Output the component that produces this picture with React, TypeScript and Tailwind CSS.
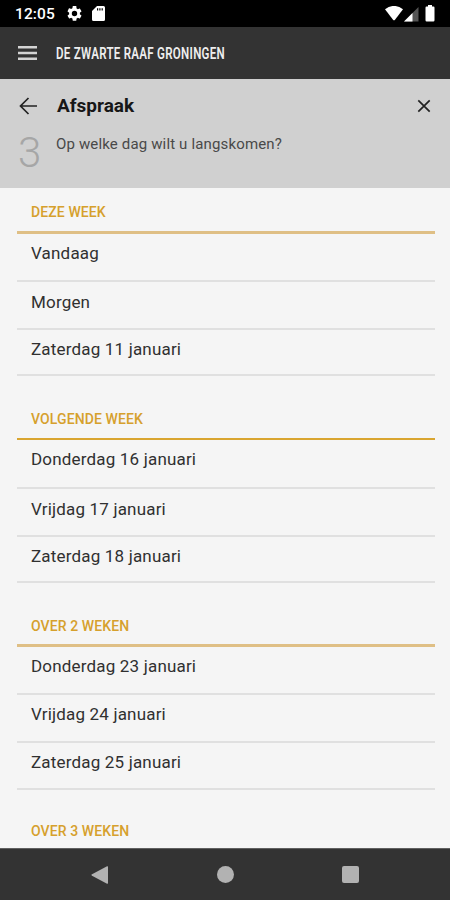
type Day = { label: string; row: string };
type Week = { title: string; head: string; days: Day[] };

const weeks: Week[] = [
  {
    title: 'DEZE WEEK',
    head: 'h-[46px] pt-[14px] border-[#dfbf85] border-b-[3px]',
    days: [
      { label: 'Vandaag', row: 'h-12 pt-2' },
      { label: 'Morgen', row: 'h-12 pt-[9px]' },
      { label: 'Zaterdag 11 januari', row: 'h-[46px] pt-2' },
    ],
  },
  {
    title: 'VOLGENDE WEEK',
    head: 'h-16 pt-[33px] border-[#d9a530] border-b-2',
    days: [
      { label: 'Donderdag 16 januari', row: 'h-[49px] pt-2' },
      { label: 'Vrijdag 17 januari', row: 'h-12 pt-[9px]' },
      { label: 'Zaterdag 18 januari', row: 'h-[46px] pt-2' },
    ],
  },
  {
    title: 'OVER 2 WEKEN',
    head: 'h-16 pt-[33px] border-[#dfbf85] border-b-[3px]',
    days: [
      { label: 'Donderdag 23 januari', row: 'h-12 pt-2' },
      { label: 'Vrijdag 24 januari', row: 'h-12 pt-2' },
      { label: 'Zaterdag 25 januari', row: 'h-[47px] pt-2' },
    ],
  },
];

function StatusBar() {
  return (
    <div className="flex h-[27px] shrink-0 items-start bg-black text-white">
      <span className="ml-[15px] mt-[4px] w-[52px] text-[15.5px] font-medium leading-5 tracking-[0.1px]">12:05</span>
      <svg className="mt-[6px] h-[15px] w-[15px]" viewBox="2 2 20 20" fill="currentColor">
        <path d="M19.14 12.94c.04-.3.06-.61.06-.94s-.02-.64-.07-.94l2.03-1.58a.49.49 0 0 0 .12-.61l-1.92-3.32a.49.49 0 0 0-.59-.22l-2.39.96a7 7 0 0 0-1.62-.94l-.36-2.54A.48.48 0 0 0 13.92 2h-3.84a.48.48 0 0 0-.48.41l-.36 2.54c-.59.24-1.13.57-1.62.94l-2.39-.96a.48.48 0 0 0-.59.22L2.74 8.87a.48.48 0 0 0 .12.61l2.03 1.58a7 7 0 0 0 0 1.88l-2.03 1.58a.49.49 0 0 0-.12.61l1.92 3.32c.12.22.37.29.59.22l2.39-.96c.5.38 1.03.7 1.62.94l.36 2.54c.05.24.24.41.48.41h3.84c.24 0 .44-.17.47-.41l.36-2.54c.59-.24 1.13-.56 1.62-.94l2.39.96c.22.08.47 0 .59-.22l1.92-3.32a.48.48 0 0 0-.12-.61zM12 15.6a3.6 3.6 0 1 1 0-7.2 3.6 3.6 0 0 1 0 7.2z" />
      </svg>
      <svg className="ml-[10px] mt-[6px] h-[15px] w-[13px]" viewBox="0 0 13 15" fill="currentColor">
        <path fillRule="evenodd" d="M5 0h6.5Q13 0 13 1.5v12Q13 15 11.5 15h-10Q0 15 0 13.5V5zM5 2.3v2.2h1.2V2.3zM7.3 2.3v2.2h1.2V2.3zM9.6 2.3v2.2h1.2V2.3z" />
      </svg>
      <svg className="ml-auto mt-[6px] h-[15px] w-[18px]" viewBox="0 0 18 15" fill="currentColor">
        <path d="M0 3.2Q9-3.4 18 3.2L10 13.8Q9 14.8 8 13.8z" />
      </svg>
      <svg className="ml-[1px] mt-[6px] h-[16px] w-[15px]" viewBox="0 0 15 16">
        <path d="M0 15.5 14.5 1v14.5z" fill="#555" />
        <path d="M0 15.5 8.5 7v8.5z" fill="#fff" />
      </svg>
      <svg className="ml-[6px] mr-[15px] mt-[5px] h-[17px] w-[10px]" viewBox="0 0 10 17" fill="currentColor">
        <path d="M3 0h4v1.6h1.5Q9.5 1.6 9.5 2.8v12.5Q9.5 16.6 8.3 16.6H1.7Q.5 16.6.5 15.3V2.8Q.5 1.6 1.5 1.6H3z" />
      </svg>
    </div>
  );
}

function WeekSection({ week }: { week: Week }) {
  return (
    <section>
      <h2 className={`${week.head} pl-[14px] text-[14px] font-medium leading-5 tracking-[0.1px] text-[#d6a02c]`}>{week.title}</h2>
      <ul>
        {week.days.map((day) => (
          <li
            key={day.label}
            className={`${day.row} border-b-2 border-[#e0e0e0] pl-[14px] text-[17px] leading-[22px] tracking-[0.18px] text-[#303030]`}
          >
            {day.label}
          </li>
        ))}
      </ul>
    </section>
  );
}

export default function App() {
  return (
    <div className="flex h-[900px] w-[450px] flex-col overflow-hidden bg-[#f5f5f5] font-['Roboto','Liberation_Sans',sans-serif]">
      <StatusBar />
      <header className="flex h-[52px] shrink-0 items-center bg-[#333] pl-[18px]">
        <svg className="h-[16px] w-[19px]" viewBox="0 0 19 16" fill="#d4d4d4">
          <path d="M0 1h19v2.4H0zM0 6.8h19v2.4H0zM0 12.600h19V15H0z" />
        </svg>
        <h1 className="ml-[19px] origin-left scale-x-[0.68] whitespace-nowrap text-[17px] font-semibold leading-6 tracking-[0.4px] text-[#eeeeee]">
          DE ZWARTE RAAF GRONINGEN
        </h1>
      </header>
      <div className="h-[109px] shrink-0 bg-[#d0d0d0]">
        <div className="flex h-[53px] items-center px-[19px]">
          <svg className="h-[18px] w-[18px]" viewBox="0 0 18 18" fill="none" stroke="#222" strokeWidth="1.7">
            <path d="M18 9H1.5M9.500 1 1.500 9l8 8" />
          </svg>
          <h2 className="ml-5 text-[19px] font-bold leading-6 text-[#171717]">Afspraak</h2>
          <svg className="ml-auto h-[14px] w-[14px]" viewBox="0 0 14 14" fill="none" stroke="#222" strokeWidth="1.7">
            <path d="m1.300 1.300 11.400 11.400M12.700 1.300 1.300 12.700" />
          </svg>
        </div>
        <div className="flex items-start pl-[18px]">
          <span className="w-[38px] text-[42px] font-light leading-[42px] text-[#a6a6a6]">3</span>
          <p className="mt-[2px] whitespace-nowrap text-[15px] leading-5 tracking-[0.15px] text-[#494949]">
            Op welke dag wilt u langskomen?
          </p>
        </div>
      </div>
      <main className="min-h-0 flex-1 overflow-hidden pl-[17px] pr-[15px]">
        {weeks.map((week) => (
          <WeekSection key={week.title} week={week} />
        ))}
        <h2 className="pl-[14px] pt-[31px] text-[14px] font-medium leading-5 tracking-[0.1px] text-[#d6a02c]">OVER 3 WEKEN</h2>
      </main>
      <nav className="flex h-[52px] shrink-0 items-center justify-between border-t border-[#606060] bg-[#333] px-[91px]">
        <svg className="h-[18px] w-[18px]" viewBox="0 0 18 18" fill="#b2b2b2">
          <path d="M1 8.300 16 .3q1-.5 1 .6v16.200q0 1.100-1 .6L1 9.700q-1.200-.7 0-1.400z" />
        </svg>
        <span className="h-[17px] w-[17px] rounded-full bg-[#b2b2b2]" />
        <span className="h-[17px] w-[17px] rounded-[2px] bg-[#b2b2b2]" />
      </nav>
    </div>
  );
}
